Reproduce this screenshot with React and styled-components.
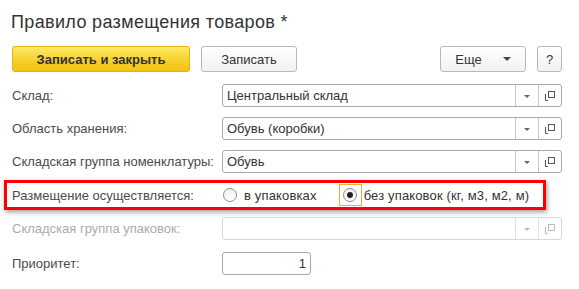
import React from "react";
import styled, { createGlobalStyle } from "styled-components";

const Global = createGlobalStyle`
  body {
    margin: 0;
    background: #fff;
    font-family: Arial, "Liberation Sans", sans-serif;
  }
`;

const Page = styled.div`
  width: 579px;
  height: 289px;
  padding: 11px 17px 0 12px;
  box-sizing: border-box;
  color: #333;
`;

const Title = styled.h1`
  margin: 0;
  font-size: 18px;
  line-height: 22px;
  font-weight: normal;
  letter-spacing: 0.35px;
  color: #333;
  margin-left: -1px;
`;

const Toolbar = styled.div`
  display: flex;
  align-items: center;
  gap: 11px;
  margin-top: 13px;
`;

const Button = styled.button`
  height: 26px;
  box-sizing: border-box;
  padding: 0 ${(p) => p.$pad || 10}px;
  width: ${(p) => (p.$w ? p.$w + "px" : "auto")};
  border-radius: 3px;
  border: 1px solid ${(p) => (p.$primary ? "#e2b312" : "#b8b8b8")};
  background: ${(p) =>
    p.$primary
      ? "linear-gradient(#fde965, #f7ce2a 60%, #f4c212)"
      : "linear-gradient(#ffffff, #f1f1f1)"};
  font-family: Arial, "Liberation Sans", sans-serif;
  font-size: 13px;
  font-weight: ${(p) => (p.$primary ? "bold" : "normal")};
  color: #333;
  display: flex;
  align-items: center;
  justify-content: center;
`;

const Spacer = styled.div`
  flex: 1;
`;

const MoreArrow = styled.span`
  width: 0;
  height: 0;
  border-left: 4px solid transparent;
  border-right: 4px solid transparent;
  border-top: 4px solid #444;
  margin-left: 21px;
`;

const Form = styled.div`
  margin-top: 12px;
  display: flex;
  flex-direction: column;
  gap: 10px;
`;

const Row = styled.div`
  display: grid;
  grid-template-columns: 210px 340px;
  align-items: center;
  height: 23px;
  margin-top: ${(p) => p.$mt || 0}px;
`;

const Label = styled.div`
  font-size: 13px;
  color: ${(p) => (p.$disabled ? "#ababab" : "#4b4b4b")};
  white-space: nowrap;
`;

const Field = styled.div`
  display: flex;
  height: 23px;
  width: ${(p) => (p.$w ? p.$w + "px" : "auto")};
  box-sizing: border-box;
  border: 1px solid ${(p) => (p.$disabled ? "#d6d6d6" : "#a9a9a9")};
  border-radius: 3px;
  background: #fff;
`;

const Value = styled.div`
  flex: 1;
  padding: 0 4px;
  font-size: 13px;
  line-height: 21px;
  color: #333;
  text-align: ${(p) => (p.$right ? "right" : "left")};
  white-space: nowrap;
  overflow: hidden;
`;

const FieldBtn = styled.div`
  width: 22px;
  border-left: 1px solid ${(p) => (p.$disabled ? "#e2e2e2" : "#c8c8c8")};
  display: flex;
  align-items: center;
  justify-content: center;
`;

const DownTri = styled.span`
  width: 0;
  height: 0;
  border-left: 3px solid transparent;
  border-right: 3px solid transparent;
  border-top: 3px solid ${(p) => (p.$disabled ? "#bbb" : "#666")};
  margin-top: 2px;
`;

const Highlight = styled.div`
  display: grid;
  grid-template-columns: 210px auto;
  align-items: center;
  height: 24px;
  width: 531px;
  margin: -3px 0 -3px -8px;
  padding-left: 5px;
  box-sizing: content-box;
  border: 3px solid #ff0000;
  box-shadow: 1px 2px 5px rgba(0, 0, 0, 0.4);
`;

const RadioGroup = styled.div`
  display: flex;
  align-items: center;
`;

const RadioItem = styled.label`
  display: flex;
  align-items: center;
  font-size: 13px;
  color: #333;
  letter-spacing: ${(p) => p.$ls || 0}px;
  margin-right: ${(p) => p.$mr || 0}px;
`;

const Focus = styled.span`
  display: flex;
  align-items: center;
  justify-content: center;
  width: 23px;
  height: 22px;
  box-sizing: border-box;
  border: 1px solid ${(p) => (p.$focused ? "#e6b42a" : "transparent")};
  margin: 0 ${(p) => p.$gap}px 0 -4px;
`;

const Circle = styled.span`
  width: 14px;
  height: 14px;
  box-sizing: border-box;
  border-radius: 50%;
  border: 1px solid #8c8c8c;
  background: linear-gradient(#f2f2f2, #ffffff);
  display: flex;
  align-items: center;
  justify-content: center;
  &::after {
    content: "";
    width: 6px;
    height: 6px;
    border-radius: 50%;
    background: ${(p) => (p.$checked ? "#222" : "transparent")};
  }
`;

const OpenIcon = ({ disabled }) => (
  <svg width="10" height="10" viewBox="0 0 10 10">
    <g fill="none" stroke={disabled ? "#bbb" : "#555"} strokeWidth="1">
      <rect x="3.5" y="0.5" width="6" height="6" />
      <path d="M0.5 3 V9.5 H3" />
    </g>
  </svg>
);

const Select = ({ value, disabled }) => (
  <Field $disabled={disabled}>
    <Value>{value}</Value>
    <FieldBtn $disabled={disabled}>
      <DownTri $disabled={disabled} />
    </FieldBtn>
    <FieldBtn $disabled={disabled}>
      <OpenIcon disabled={disabled} />
    </FieldBtn>
  </Field>
);

const rows = [
  { label: "Склад:", value: "Центральный склад" },
  { label: "Область хранения:", value: "Обувь (коробки)" },
  { label: "Складская группа номенклатуры:", value: "Обувь" },
];

export default function App() {
  return (
    <Page>
      <Global />
      <Title>Правило размещения товаров *</Title>
      <Toolbar>
        <Button $primary $w={178}>Записать и закрыть</Button>
        <Button $w={96}>Записать</Button>
        <Spacer />
        <Button $w={86} $pad={0}>
          Еще
          <MoreArrow />
        </Button>
        <Button $w={25} $pad={0}>?</Button>
      </Toolbar>
      <Form>
        {rows.map((r) => (
          <Row key={r.label}>
            <Label>{r.label}</Label>
            <Select value={r.value} />
          </Row>
        ))}
        <Highlight>
          <Label>Размещение осуществляется:</Label>
          <RadioGroup>
            <RadioItem $mr={26} $ls={0.15}>
              <Focus $gap={3}>
                <Circle />
              </Focus>
              в упаковках
            </RadioItem>
            <RadioItem $ls={0.15}>
              <Focus $focused $gap={2}>
                <Circle $checked />
              </Focus>
              без упаковок (кг, м3, м2, м)
            </RadioItem>
          </RadioGroup>
        </Highlight>
        <Row>
          <Label $disabled>Складская группа упаковок:</Label>
          <Select value="" disabled />
        </Row>
        <Row $mt={2}>
          <Label>Приоритет:</Label>
          <Field $w={89}>
            <Value $right>1</Value>
          </Field>
        </Row>
      </Form>
    </Page>
  );
}
